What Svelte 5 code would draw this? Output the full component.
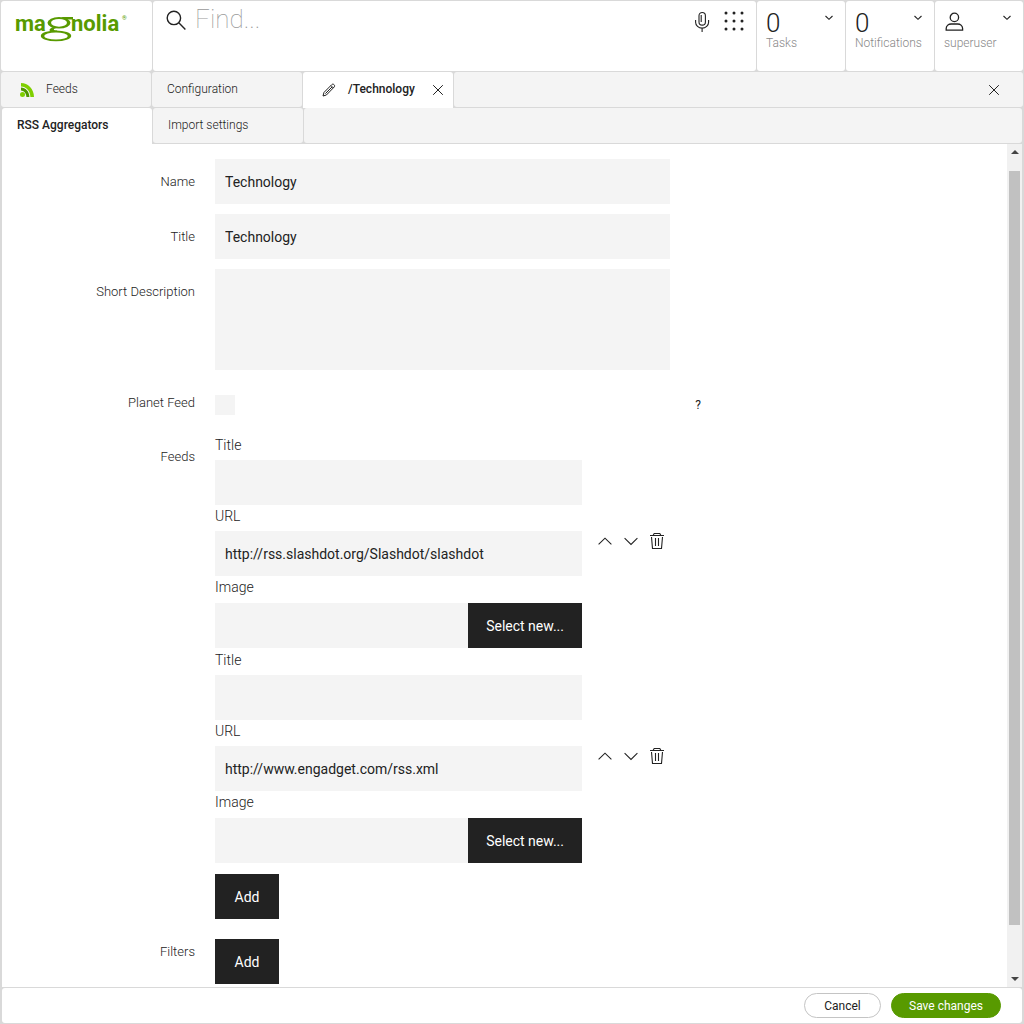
<script>
  let feeds = $state([
    { title: '', url: 'http://rss.slashdot.org/Slashdot/slashdot', image: '' },
    { title: '', url: 'http://www.engadget.com/rss.xml', image: '' }
  ]);
  let name = $state('Technology');
  let title = $state('Technology');
  const dots = [2, 10, 18];
</script>

{#snippet chevron()}
  <svg class="chevron" viewBox="0 0 10 6" width="10" height="6" aria-hidden="true"><path d="M1.5 1 5 4.300 8.500 1" /></svg>
{/snippet}

{#snippet cross()}
  <svg viewBox="0 0 12 12" width="12" height="12" aria-hidden="true"><path d="M1.200 1.200l9.600 9.600M10.800 1.200 1.200 10.800" /></svg>
{/snippet}

<div class="app">
  <header>
    <a class="cell brand" href="#home" aria-label="magnolia">
      <svg viewBox="0 0 114 32" width="114" height="32">
        <text class="word" x="0" y="21">ma</text>
        <text class="word" x="56" y="21">nolia</text>
        <text class="reg" x="107" y="10">®</text>
        <g class="swash">
          <ellipse cx="44" cy="12.800" rx="11.500" ry="5.800" />
          <path d="M46 7.100H58V9.400H50z" />
          <path d="M38 17C32 19.500 34 22.600 42 22.600V20.600C38 20.600 38 19 41 18z" />
          <ellipse cx="41" cy="25.900" rx="15.200" ry="5.400" />
        </g>
        <g class="hole">
          <ellipse cx="44" cy="12.800" rx="8" ry="3.900" />
          <ellipse cx="41" cy="26" rx="11.800" ry="3.600" />
        </g>
      </svg>
    </a>
    <div class="cell search">
      <svg viewBox="0 0 22 22" width="22" height="22" aria-hidden="true"><circle cx="7.900" cy="8.900" r="6.700" /><path d="M12.800 13.800l6.600 6.600" /></svg>
      <input type="search" aria-label="Find" placeholder="Find..." />
      <button class="icon" aria-label="Voice search">
        <svg viewBox="0 0 16 22" width="16" height="22"><rect x="5" y="1.500" width="6.400" height="12.600" rx="3.200" /><path d="M1.600 9v2.200a6.400 5.800 0 0 0 13 0V9M8.100 17v4M7.200 4v7" /></svg>
      </button>
      <button class="icon" aria-label="Apps">
        <svg class="dots" viewBox="0 0 20 20" width="20" height="20">
          {#each dots as y}{#each dots as x}<circle cx={x} cy={y} r="1.500" />{/each}{/each}
        </svg>
      </button>
    </div>
    <button class="cell stat">
      <span class="count">0</span>{@render chevron()}<span class="caption">Tasks</span>
    </button>
    <button class="cell stat">
      <span class="count">0</span>{@render chevron()}<span class="caption">Notifications</span>
    </button>
    <button class="cell stat">
      <svg class="user" viewBox="0 0 20 20" width="20" height="20" aria-hidden="true"><circle cx="10.400" cy="5.400" r="4.200" /><path d="M2.200 18.200v-1.600c0-3 2.400-4.600 5-4.600h6.400c2.600 0 5 1.600 5 4.600v1.600z" /></svg>
      {@render chevron()}<span class="caption">superuser</span>
    </button>
  </header>

  <nav class="tabs">
    <a class="cell tab home" href="#feeds">
      <svg viewBox="0 0 14 14" width="14" height="14" aria-hidden="true">
        <path fill="#7fcf00" d="M1 0C8 0 14 6 14 14H10.400C10.400 8 6 3.600 1 3.600z" />
        <path fill="#4f9800" d="M1 4.600C5.400 4.600 9.400 8.600 9.400 14H6.400C6.400 10.400 3.600 7.600 1 7.600z" />
        <circle fill="#7fcf00" cx="2.500" cy="11.500" r="2.500" />
      </svg>
      Feeds
    </a>
    <a class="cell tab" href="#configuration">Configuration</a>
    <div class="cell tab active doc">
      <svg viewBox="0 0 14 14" width="14" height="14" aria-hidden="true"><path d="M1 13l1-3.600L9.800 1.600c1.400-1.400 3.800.8 2.400 2.400L4.400 12zM3.400 10.600l6.600-6.600M9 2.600l2.400 2.400" /></svg>
      <a href="#technology">/Technology</a>
      <button class="icon" aria-label="Close tab">{@render cross()}</button>
    </div>
    <div class="cell rest"><button class="icon" aria-label="Close app">{@render cross()}</button></div>
  </nav>

  <nav class="tabs sub">
    <a class="cell tab active" href="#aggregators">RSS Aggregators</a>
    <a class="cell tab" href="#import">Import settings</a>
    <div class="cell rest"></div>
  </nav>

  <main>
    <form id="editor">
      <div class="row">
        <label for="name">Name</label>
        <input class="field wide" id="name" type="text" bind:value={name} />
      </div>
      <div class="row">
        <label for="title">Title</label>
        <input class="field wide" id="title" type="text" bind:value={title} />
      </div>
      <div class="row">
        <label for="description">Short Description</label>
        <textarea class="field wide" id="description"></textarea>
      </div>
      <div class="row planet">
        <label for="planet">Planet Feed</label>
        <div class="check">
          <input id="planet" type="checkbox" />
          <button class="help" type="button" aria-label="Help">?</button>
        </div>
      </div>
      <div class="row" role="group" aria-labelledby="feeds-label">
        <span class="label" id="feeds-label">Feeds</span>
        <div>
          {#each feeds as feed, i}
            <div class="feed">
              <div class="inputs">
                <label for="feed-title-{i}">Title</label>
                <input class="field" id="feed-title-{i}" type="text" bind:value={feed.title} />
                <label for="feed-url-{i}">URL</label>
                <input class="field" id="feed-url-{i}" type="text" bind:value={feed.url} />
                <label class="image" for="feed-image-{i}">Image</label>
                <div class="picker">
                  <input class="field" id="feed-image-{i}" type="text" bind:value={feed.image} />
                  <button class="dark" type="button">Select new...</button>
                </div>
              </div>
              <div class="actions">
                <button class="icon" type="button" aria-label="Move up">
                  <svg viewBox="0 0 14 18" width="14" height="18"><path d="M.6 12.400 7 6.200l6.400 6.200" /></svg>
                </button>
                <button class="icon" type="button" aria-label="Move down">
                  <svg viewBox="0 0 14 18" width="14" height="18"><path d="M.6 6.200 7 12.400l6.400-6.200" /></svg>
                </button>
                <button class="icon" type="button" aria-label="Remove">
                  <svg viewBox="0 0 14 18" width="14" height="18"><path d="M0 3.500h14M3.200 3.200l1-1.700h5.600l1 1.700M1.500 5l1 11.500h9l1-11.500M5.500 6v8M8.500 6v8" /></svg>
                </button>
              </div>
            </div>
          {/each}
          <button class="dark add" type="button">Add</button>
        </div>
      </div>
      <div class="row" role="group" aria-labelledby="filters-label">
        <span class="label" id="filters-label">Filters</span>
        <div><button class="dark add" type="button">Add</button></div>
      </div>
    </form>
    <div class="scrollbar" aria-hidden="true">
      <svg viewBox="0 0 8 4" width="8" height="4"><path d="M0 4 4 0l4 4z" /></svg>
      <div class="track"><div class="thumb"></div></div>
      <svg viewBox="0 0 8 4" width="8" height="4"><path d="M0 0l4 4 4-4z" /></svg>
    </div>
  </main>

  <footer class="cell">
    <button class="pill">Cancel</button>
    <button class="pill save" form="editor" type="button">Save changes</button>
  </footer>
</div>

<style>
  :global(body) {
    margin: 0;
  }
  .app {
    box-sizing: border-box;
    height: 100vh;
    padding: 1px;
    display: flex;
    flex-direction: column;
    gap: 1px;
    background: #d9d9d9;
    font-family: Roboto, sans-serif;
    font-size: 12px;
    color: #222;
  }
  .app * {
    box-sizing: border-box;
  }
  a {
    color: inherit;
    text-decoration: none;
  }
  button,
  input,
  textarea {
    margin: 0;
    padding: 0;
    border: 0;
    border-radius: 0;
    background: none;
    font-family: inherit;
    color: inherit;
  }
  svg {
    display: block;
    flex: none;
    fill: none;
    stroke: #222;
    stroke-width: 1.1;
  }
  .cell {
    background: #fff;
    border-radius: 3px;
  }
  header {
    display: grid;
    grid-template-columns: 151px 1fr 88px 88px 88px;
    gap: 1px;
    height: 70px;
    flex: none;
  }
  .brand {
    padding: 9px 0 0 14px;
  }
  .brand svg {
    overflow: visible;
    fill: #589a00;
    stroke: none;
    font-weight: 700;
  }
  .word {
    font-size: 22px;
  }
  .reg {
    font-size: 6px;
  }
  .hole {
    fill: #fff;
  }
  .search {
    display: flex;
    align-items: flex-start;
    gap: 14px;
    padding: 8px 12px 0 13px;
  }
  .search > svg {
    margin-right: -7px;
    stroke-width: 1.4;
  }
  .search input {
    flex: 1;
    min-width: 0;
    height: 32px;
    margin-top: -6px;
    font-size: 26px;
    font-weight: 100;
    outline: 0;
  }
  .search input::placeholder {
    color: #999;
    opacity: 1;
  }
  .search .icon {
    margin-top: 2px;
  }
  .dots {
    fill: #222;
    stroke: none;
  }
  .icon {
    display: block;
    cursor: pointer;
  }
  .stat {
    display: grid;
    grid-template-columns: 1fr auto;
    grid-template-rows: 25px 16px;
    align-content: start;
    padding: 9px 11px 0 9px;
    text-align: left;
  }
  .count {
    font-size: 26px;
    line-height: 26px;
    font-weight: 300;
  }
  .user {
    margin-top: 2px;
    stroke-width: 1.3;
  }
  .chevron {
    margin-top: 5px;
  }
  .caption {
    grid-column: 1 / 3;
    font-size: 12px;
    line-height: 16px;
    font-weight: 300;
    color: #888;
  }
  .tabs {
    display: grid;
    grid-template-columns: 150px 150px 150px 1fr;
    grid-template-rows: 35px;
    gap: 1px;
    height: 35px;
    flex: none;
  }
  .sub {
    grid-template-columns: 150px 150px 1fr;
    margin: 0 1px;
  }
  .tab,
  .rest {
    display: flex;
    align-items: center;
    background: #f4f4f4;
  }
  .tab {
    padding: 0 0 2px 15px;
    font-size: 12px;
    font-weight: 300;
  }
  .home {
    gap: 12px;
    padding-left: 19px;
  }
  .home svg {
    margin-top: 2px;
    stroke: none;
  }
  .tab.active {
    height: 36px;
    padding-bottom: 3px;
    border-radius: 3px 3px 0 0;
    background: #fff;
    font-weight: 500;
  }
  .doc {
    gap: 12px;
    padding: 0 9px 0 19px;
  }
  .doc .icon {
    margin-left: auto;
  }
  .doc svg,
  .rest svg {
    stroke-width: 1;
  }
  .doc svg {
    margin-top: 2px;
  }
  .rest {
    justify-content: flex-end;
    padding-right: 23px;
  }
  .sub .rest {
    padding: 0;
  }
  main {
    display: flex;
    flex: 1;
    min-height: 0;
    margin: 0 1px;
    background: #fff;
  }
  form {
    flex: 1;
    min-width: 0;
    display: flex;
    flex-direction: column;
    gap: 10px;
    padding-top: 15px;
    overflow: hidden;
  }
  .row {
    display: grid;
    grid-template-columns: 193px 1fr;
    column-gap: 20px;
    flex: none;
  }
  .row > label,
  .label {
    padding-top: 15px;
    line-height: 16px;
    text-align: right;
    font-size: 13px;
    font-weight: 300;
  }
  .field {
    display: block;
    width: 100%;
    min-width: 0;
    height: 45px;
    padding: 0 10px;
    background: #f4f4f4;
    font-size: 14px;
    font-weight: 400;
  }
  .wide {
    width: 455px;
    max-width: 100%;
  }
  textarea.field {
    height: 101px;
    resize: none;
  }
  .planet {
    height: 44px;
  }
  .check {
    display: flex;
    align-items: center;
    justify-content: space-between;
    width: 486px;
    max-width: 100%;
    height: 50px;
  }
  .check input {
    appearance: none;
    width: 20px;
    height: 20px;
    background: #f4f4f4;
  }
  .help {
    font-size: 12px;
  }
  .feed {
    display: flex;
    gap: 16px;
    padding-bottom: 1px;
  }
  .inputs {
    width: 367px;
  }
  .inputs label {
    display: block;
    margin-bottom: 4px;
    line-height: 22px;
    font-size: 14px;
    font-weight: 300;
  }
  .inputs .image {
    margin-bottom: 5px;
  }
  .picker {
    display: flex;
  }
  .dark {
    flex: none;
    height: 45px;
    padding: 0 18px;
    background: #222;
    color: #fff;
    font-size: 14px;
    font-weight: 400;
  }
  .add {
    display: block;
    min-width: 64px;
    margin-top: 10px;
  }
  .actions {
    display: flex;
    align-items: center;
    gap: 12px;
  }
  .scrollbar {
    display: flex;
    flex-direction: column;
    align-items: center;
    width: 15px;
    padding: 6px 0;
    background: #f1f1f1;
  }
  .scrollbar svg {
    fill: #444;
    stroke: none;
  }
  .track {
    flex: 1;
    width: 11px;
    padding: 17px 0 0;
  }
  .thumb {
    height: 93.500%;
    background: #c1c1c1;
  }
  footer {
    display: flex;
    align-items: center;
    justify-content: flex-end;
    gap: 10px;
    height: 35px;
    flex: none;
    margin: 0 1px;
    padding-right: 21px;
  }
  .pill {
    min-width: 77px;
    height: 25px;
    padding: 0 17px;
    border: 1px solid #c4c4c4;
    border-radius: 13px;
    background: #fff;
    font-size: 12px;
  }
  .pill.save {
    border-color: #589a00;
    background: #589a00;
    color: #fff;
  }
</style>
